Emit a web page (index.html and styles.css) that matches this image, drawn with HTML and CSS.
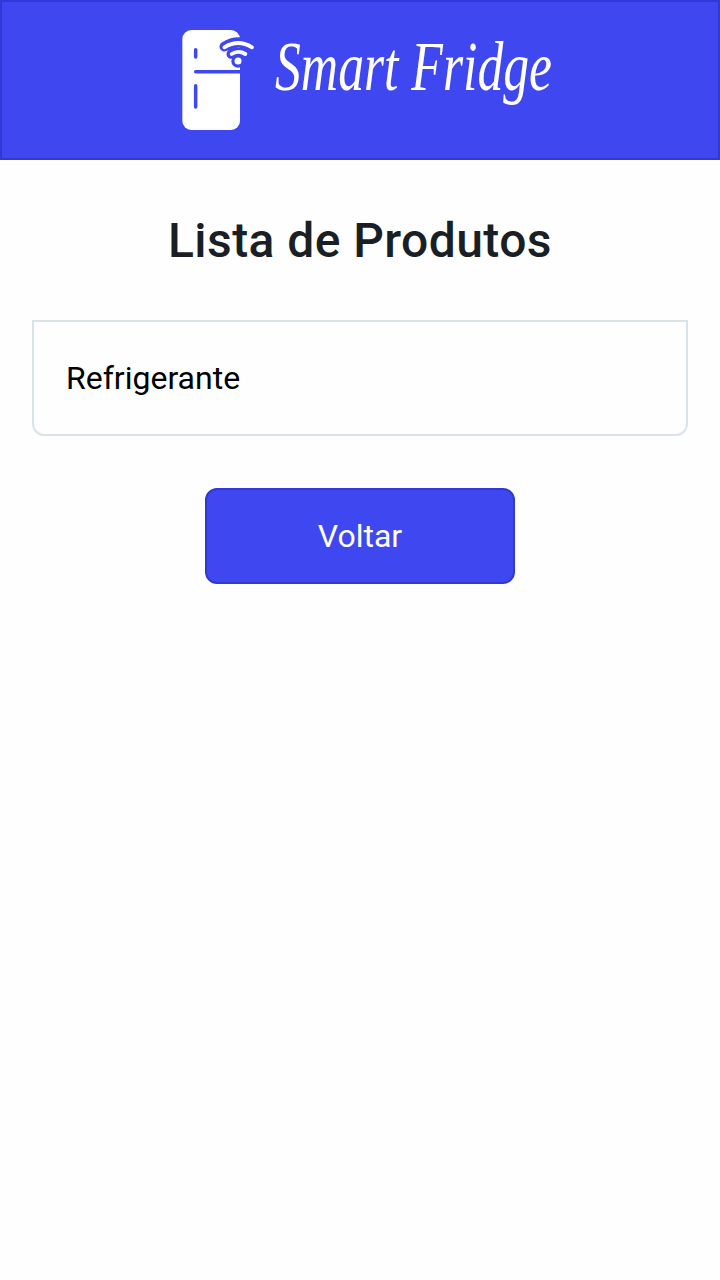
FILE: index.html
```html
<!DOCTYPE html>
<html lang="pt-BR">
<head>
<meta charset="utf-8">
<meta name="viewport" content="width=device-width, initial-scale=1">
<title>Smart Fridge</title>
<link rel="stylesheet" href="styles.css">
</head>
<body>
<header class="topbar">
  <svg class="fridge" viewBox="36 30 216 300" aria-hidden="true">
    <rect class="solid" x="37" y="30" width="173" height="300" rx="27"/>
    <path class="detail" d="M77 89v22M77 197v64M77 155h135"/>
    <path class="halo" d="M163 80Q205 53 250 81M184 102Q205 90 228 103"/>
    <circle class="cut" cx="204" cy="123" r="20"/>
    <path class="wave" d="M163 82Q205 56 246 82M185 102Q205 89 226 102"/>
    <circle class="solid" cx="204" cy="123" r="10.5"/>
  </svg>
  <svg class="wordmark" viewBox="0 0 280 90">
    <text x="0" y="63" textLength="277" lengthAdjust="spacingAndGlyphs">Smart Fridge</text>
  </svg>
</header>
<main class="content">
  <h1 class="title">Lista de Produtos</h1>
  <ul class="products">
    <li class="product">Refrigerante</li>
  </ul>
  <button class="back" type="button">Voltar</button>
</main>
</body>
</html>
```
FILE: styles.css
```css
* { box-sizing: border-box; }
body {
  margin: 0;
  min-height: 100vh;
  background: #fefefe;
  font-family: Roboto, sans-serif;
}
.topbar {
  display: flex;
  height: 160px;
  padding: 28px 0 0 180px;
  gap: 21px;
  background: #3f48f0;
  border: 2px solid #3238d4;
}
.fridge { width: 72px; height: 100px; overflow: visible; }
.solid { fill: #fff; }
.cut { fill: #3f48f0; }
.detail, .halo, .wave { fill: none; stroke-linecap: round; }
.detail { stroke: #3f48f0; stroke-width: 10.5; }
.halo { stroke: #3f48f0; stroke-width: 29; }
.wave { stroke: #fff; stroke-width: 11.5; }
.wordmark {
  width: 280px;
  height: 90px;
  margin-top: -3px;
  overflow: visible;
  fill: #fff;
  font: italic 69px "Liberation Serif", serif;
}
.content {
  display: flex;
  flex-direction: column;
  align-items: center;
  padding: 53px 32px 0;
}
.title {
  margin: 0;
  color: #1a1f26;
  font-size: 48px;
  font-weight: 500;
  line-height: 56px;
  letter-spacing: 0.43px;
  white-space: nowrap;
}
.products {
  width: 100%;
  margin: 51px 0 52px;
  padding: 0;
  list-style: none;
}
.product {
  height: 116px;
  padding: 0 32px;
  border: 2px solid #d8e4e8;
  border-radius: 0 0 12px 12px;
  color: #000;
  font-size: 32px;
  line-height: 112px;
}
.back {
  width: 310px;
  height: 96px;
  padding: 0;
  border: 2px solid #3238d0;
  border-radius: 12px;
  background: #3f48f0;
  color: #fff;
  font: 400 32px Roboto, sans-serif;
}
```
